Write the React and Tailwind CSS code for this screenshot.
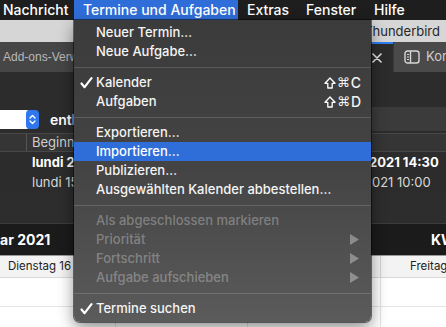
import React from "react";

function Check({ className }) {
  return (
    <svg className={className} width="13" height="12" viewBox="0 0 13 12" fill="none">
      <path d="M1.5 6.5 L4.6 10.2 L11.5 1.2" stroke="white" strokeWidth="2.2" strokeLinecap="round" strokeLinejoin="round" />
    </svg>
  );
}

function Arrow() {
  return (
    <svg className="absolute right-[12px] top-[4px]" width="9" height="11" viewBox="0 0 9 11">
      <path d="M0 0 L9 5.5 L0 11 Z" fill="rgba(255,255,255,0.35)" />
    </svg>
  );
}

function Shift() {
  return (
    <svg width="12" height="12" viewBox="0 0 12 12" fill="none">
      <path d="M6 1 L11 6.3 H8.2 V11 H3.8 V6.3 H1 Z" stroke="white" strokeWidth="1.3" strokeLinejoin="round" />
    </svg>
  );
}

function Item({ children, check, shortcut, disabled, submenu, active }) {
  return (
    <div
      className={`relative flex h-[19px] items-center pl-[22px] pr-[10px] text-[13px] font-medium leading-none ${
        active ? "bg-[#2f6ed9] text-white" : disabled ? "text-white/30" : "text-[#f4f4f4]"
      }`}
    >
      {check && <Check className="absolute left-[6px] top-[4px]" />}
      <span className="flex-1 whitespace-nowrap">{children}</span>
      {shortcut && (
        <span className="flex items-center whitespace-nowrap">
          <Shift />
          <span className="ml-[1px] font-['DejaVu_Sans'] text-[13px]">⌘</span>
          <span className="ml-[1px] text-[14px]">{shortcut}</span>
        </span>
      )}
      {submenu && <Arrow />}
    </div>
  );
}

function Sep() {
  return (
    <div className="flex h-[12px] items-center">
      <div className="h-px w-full bg-white/15" />
    </div>
  );
}

export default function App() {
  return (
    <div className="relative h-[327px] w-[446px] overflow-hidden bg-[#2c2c2c] font-['Inter','Liberation_Sans',sans-serif]">
      {/* macOS menu bar */}
      <div className="flex h-[20px] items-center bg-[#1e1e1e] text-[14px] font-medium leading-none text-white">
        <div className="w-[74px] shrink-0 pl-[3px]">Nachricht</div>
        <div className="flex h-full w-[164px] shrink-0 items-center whitespace-nowrap bg-[#2f6ed9] pl-[9px]">Termine und Aufgaben</div>
        <div className="w-[59px] shrink-0 pl-[9px]">Extras</div>
        <div className="w-[68px] shrink-0 pl-[9px]">Fenster</div>
        <div className="pl-[9px]">Hilfe</div>
      </div>

      {/* window title bar */}
      <div className="flex h-[22px] items-center justify-end bg-[#d6d6d6] pr-[6px] text-[13px] leading-none text-[#262626]">
        Thunderbird
      </div>

      {/* tab strip */}
      <div className="flex h-[30px]">
        <div className="flex w-[360px] shrink-0 items-center overflow-hidden whitespace-nowrap bg-[#464646] pl-[3px] font-['Liberation_Sans',sans-serif] text-[12px] text-[#b9b9b9]">
          Add-ons-Verwaltung
        </div>
        <div className="flex w-[33px] shrink-0 items-center border-t-2 border-[#2f7ef0] bg-[#2c2c2c] pl-[12px]">
          <svg width="10" height="10" viewBox="0 0 10 10">
            <path d="M1 1 L9 9 M9 1 L1 9" stroke="#e6e6e6" strokeWidth="1.6" strokeLinecap="round" />
          </svg>
        </div>
        <div className="flex min-w-0 flex-1 items-center gap-[6px] overflow-hidden whitespace-nowrap border-l border-[#3a3a3a] bg-[#4a4a4a] pl-[10px] text-[13px] text-[#cfcfcf]">
          <svg className="shrink-0" width="16" height="14" viewBox="0 0 16 14" fill="none">
            <rect x="1" y="1" width="14" height="12" rx="2.5" stroke="#d6d6d6" strokeWidth="1.4" />
            <path d="M6.5 1 V13" stroke="#d6d6d6" strokeWidth="1.4" />
            <path d="M3 4.5 H5 M3 7 H5 M3 9.5 H5" stroke="#d6d6d6" strokeWidth="1.2" />
          </svg>
          <span>Kontakte</span>
        </div>
      </div>

      {/* toolbar / search */}
      <div className="h-[61px] bg-[#2c2c2c] pt-[35px]">
        <div className="flex h-[24px] items-center">
          <div className="relative flex h-[19px] w-[39px] shrink-0 items-center">
            <div className="h-[19px] w-[30px] rounded-r-[4px] bg-white" />
            <svg className="absolute left-[26px] top-0" width="13" height="19" viewBox="0 0 13 19">
              <rect x="0" y="0" width="13" height="19" rx="4" fill="#2f76f0" />
              <path d="M4 8 L6.5 5.5 L9 8 M4 11 L6.5 13.5 L9 11" stroke="white" strokeWidth="1.4" fill="none" strokeLinecap="round" strokeLinejoin="round" />
            </svg>
          </div>
          <span className="ml-[11px] text-[14px] font-semibold text-white">enthält</span>
          <div className="ml-auto h-[24px] w-[190px] bg-[#3b3b3b]" />
        </div>
      </div>

      {/* table header */}
      <div className="flex h-[19px] border-y border-[#474747] bg-[#353535] text-[13px] leading-none text-[#cfcfcf]">
        <div className="w-[27px] shrink-0 border-r border-[#555555]" />
        <div className="flex items-center pl-[5px]">Beginn</div>
      </div>

      {/* rows */}
      <div className="flex h-[20px] items-center text-[13px] leading-none">
        <div className="w-[369px] shrink-0 overflow-hidden whitespace-nowrap pl-[32px] font-bold text-white">lundi 22 février</div>
        <div className="whitespace-nowrap font-bold text-white">2021 14:30</div>
      </div>
      <div className="flex h-[20px] items-center text-[13px] leading-none">
        <div className="w-[364px] shrink-0 overflow-hidden whitespace-nowrap pl-[32px] text-[#d9d9d9]">lundi 15 février</div>
        <div className="whitespace-nowrap text-[#d9d9d9]">2021 10:00</div>
      </div>
      <div className="h-[32px] border-b border-[#3d3d3d] bg-[#2d2d2d]" />

      {/* calendar header */}
      <div className="flex h-[31px] items-center bg-[#1b1b1b] text-[14px] font-bold leading-none text-white">
        <div className="w-[431px] shrink-0">ar 2021</div>
        <div className="whitespace-nowrap">KW 7</div>
      </div>

      {/* day headers */}
      <div className="flex h-[22px] border-t border-[#9a9a9a] bg-[#f3f3f3] text-[11.5px] leading-none text-[#222222]">
        <div className="flex w-[116px] shrink-0 items-center whitespace-nowrap border-r border-[#d4d4d4] pl-[8px]">Dienstag 16 févr.</div>
        <div className="w-[132px] shrink-0 border-r border-[#d4d4d4]" />
        <div className="w-[133px] shrink-0 border-r border-[#d4d4d4]" />
        <div className="flex min-w-0 flex-1 items-center overflow-hidden whitespace-nowrap pl-[29px]">Freitag 19</div>
      </div>

      {/* calendar body */}
      <div className="flex h-[60px] border-t border-[#d8d8d8] bg-white">
        <div className="w-[116px] shrink-0 border-r border-[#e4e4e4]">
          <div className="h-[29px] border-b border-[#e4e4e4]" />
        </div>
        <div className="w-[132px] shrink-0 border-r border-[#e4e4e4]">
          <div className="h-[29px] border-b border-[#e4e4e4]" />
        </div>
        <div className="w-[133px] shrink-0 border-r border-[#e4e4e4]">
          <div className="h-[29px] border-b border-[#e4e4e4]" />
        </div>
        <div className="flex-1">
          <div className="h-[29px] border-b border-[#e4e4e4]" />
        </div>
      </div>

      {/* dropdown menu */}
      <div className="absolute left-[74px] top-[20px] h-[302px] w-[297px] rounded-b-[6px] bg-gradient-to-b from-[#3b3b3b] via-[#444444] to-[#5b5b5b] pt-[3px] shadow-[0_6px_16px_rgba(0,0,0,0.45)] ring-1 ring-black/50">
        <Item>Neuer Termin…</Item>
        <Item>Neue Aufgabe…</Item>
        <Sep />
        <Item check shortcut="C">Kalender</Item>
        <Item shortcut="D">Aufgaben</Item>
        <Sep />
        <Item>Exportieren…</Item>
        <Item active>Importieren…</Item>
        <Item>Publizieren…</Item>
        <Item>Ausgewählten Kalender abbestellen…</Item>
        <Sep />
        <Item disabled>Als abgeschlossen markieren</Item>
        <Item disabled submenu>Priorität</Item>
        <Item disabled submenu>Fortschritt</Item>
        <Item disabled submenu>Aufgabe aufschieben</Item>
        <Sep />
        <Item check>Termine suchen</Item>
      </div>
    </div>
  );
}
